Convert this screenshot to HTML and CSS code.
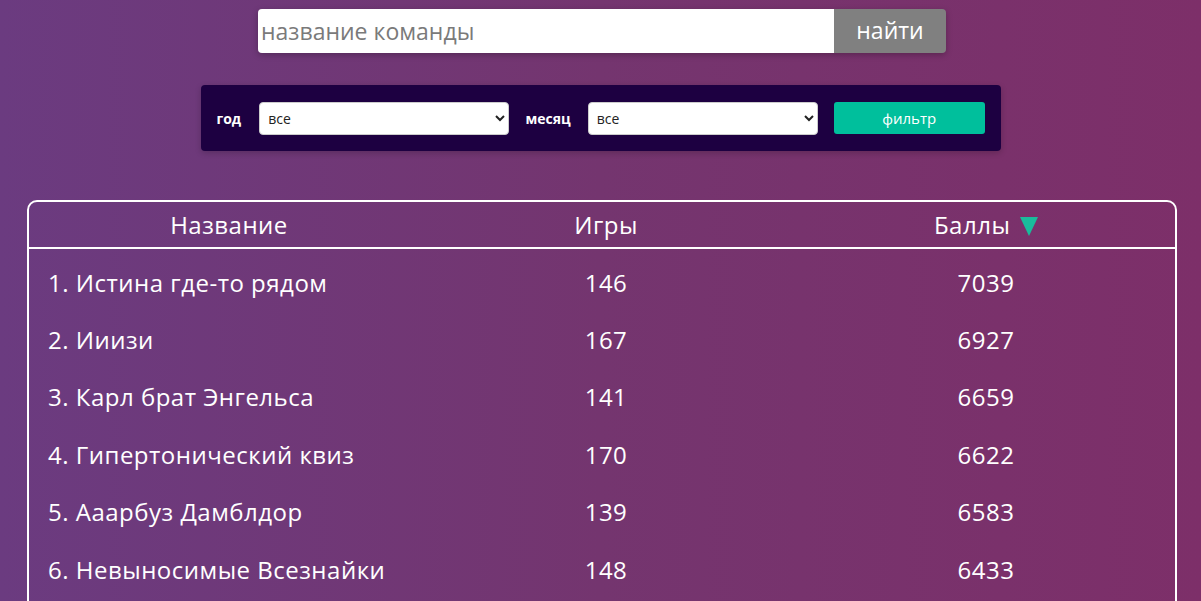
FILE: index.html
```html
<!DOCTYPE html>
<html lang="ru">
<head>
<meta charset="utf-8">
<title>Рейтинг команд</title>
<link rel="stylesheet" href="styles.css">
</head>
<body>
<div class="page">
  <form class="search">
    <input class="search-input" type="text" placeholder="название команды">
    <button class="search-btn" type="button">найти</button>
  </form>

  <form class="filter">
    <label class="filter-label">год</label>
    <select class="filter-select year"><option>все</option></select>
    <label class="filter-label">месяц</label>
    <select class="filter-select month"><option>все</option></select>
    <button class="filter-btn" type="button">фильтр</button>
  </form>

  <div class="table">
    <div class="row head">
      <div class="cell name-h">Название</div>
      <div class="cell num">Игры</div>
      <div class="cell num">Баллы <span class="sort"></span></div>
    </div>
    <div class="body">
      <div class="row"><div class="cell name">1. Истина где-то рядом</div><div class="cell num">146</div><div class="cell num">7039</div></div>
      <div class="row"><div class="cell name">2. Ииизи</div><div class="cell num">167</div><div class="cell num">6927</div></div>
      <div class="row"><div class="cell name">3. Карл брат Энгельса</div><div class="cell num">141</div><div class="cell num">6659</div></div>
      <div class="row"><div class="cell name">4. Гипертонический квиз</div><div class="cell num">170</div><div class="cell num">6622</div></div>
      <div class="row"><div class="cell name">5. Ааарбуз Дамблдор</div><div class="cell num">139</div><div class="cell num">6583</div></div>
      <div class="row"><div class="cell name">6. Невыносимые Всезнайки</div><div class="cell num">148</div><div class="cell num">6433</div></div>
    </div>
  </div>
</div>
</body>
</html>
```

FILE: styles.css
```css
* { box-sizing: border-box; }
html, body { margin: 0; padding: 0; height: 100%; overflow: hidden; }
body {
  background: linear-gradient(to right, #6b3b80 0%, #74356f 50%, #7d2f69 100%);
  font-family: "Open Sans", "Noto Sans", sans-serif;
  color: #fff;
}
.page {
  display: flex;
  flex-direction: column;
  align-items: center;
  padding-top: 9px;
}
.search {
  display: flex;
  width: 688px;
  height: 44px;
  margin-left: 3px;
  border-radius: 4px;
  box-shadow: 0 2px 6px rgba(0,0,0,0.25);
}
.search-input {
  flex: 1;
  border: none;
  outline: none;
  background: #fff;
  border-radius: 4px 0 0 4px;
  padding: 0 3px;
  font-family: "Open Sans", sans-serif;
  font-size: 23px;
  color: #333;
}
.search-input::placeholder { color: #7a7a7a; }
.search-btn {
  width: 112px;
  border: none;
  background: #808080;
  color: #fff;
  border-radius: 0 4px 4px 0;
  font-family: "Open Sans", sans-serif;
  font-size: 23px;
  padding: 0 0 2px;
}
.filter {
  margin-top: 32px;
  width: 800px;
  height: 66px;
  background: #1d0041;
  border-radius: 4px;
  box-shadow: 0 2px 6px rgba(0,0,0,0.2);
  display: flex;
  align-items: center;
  padding: 0 16px;
}
.filter-label {
  font-family: "Open Sans", sans-serif;
  font-weight: 700;
  font-size: 14px;
  color: #fff;
}
.filter-select {
  height: 33px;
  border: 1px solid #ccc;
  border-radius: 4px;
  background: #fff;
  font-family: "Open Sans", sans-serif;
  font-size: 14px;
  color: #222;
  padding: 0 4px;
}
.year { width: 251px; margin: 0 16px 0 18px; }
.month { width: 231px; margin: 0 16px 0 17px; }
.filter-btn {
  width: 151px;
  height: 32px;
  border: none;
  border-radius: 3px;
  background: #00bf9c;
  color: #fff;
  font-family: "Open Sans", sans-serif;
  font-size: 15px;
}
.table {
  margin-top: 49px;
  width: 1150px;
  border: 2px solid #fff;
  border-radius: 10px;
  align-self: flex-start;
  margin-left: 27px;
}
.row {
  display: grid;
  grid-template-columns: 400px 354px 1fr;
  align-items: center;
  height: 57.4px;
}
.row.head {
  height: 47px;
  border-bottom: 2px solid #fff;
}
.body { padding: 5px 0 60px; }
.cell { font-size: 24px; line-height: 1; letter-spacing: 0.5px; }
.name-h { text-align: center; }
.name { padding-left: 19px; }
.num { text-align: center; }
.row .num:last-child { padding-left: 14px; }
.sort {
  display: inline-block;
  width: 0; height: 0;
  border-left: 9px solid transparent;
  border-right: 9px solid transparent;
  border-top: 19px solid #1abc9c;
  margin-left: 3px;
  vertical-align: -2px;
}
```
